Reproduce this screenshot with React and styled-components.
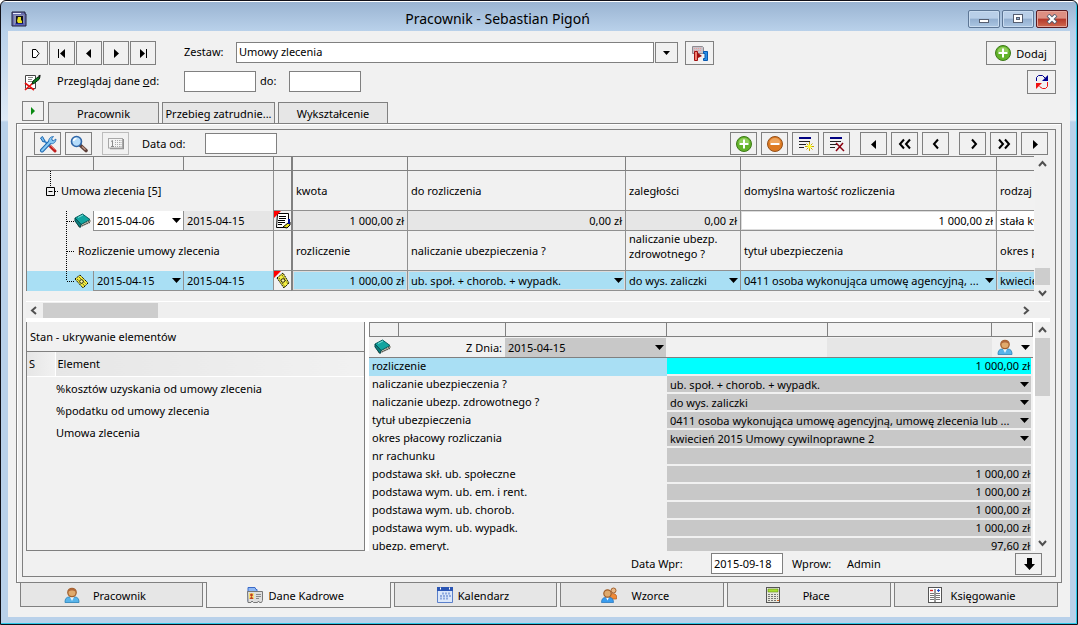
import React from "react";
import styled, { createGlobalStyle, css } from "styled-components";

const line = "#808080";
const face = "#f1f1f1";
const selected = "#a9dff4";
const sunken = "#e6e6e6";
const field = "#c8c8c8";

const GlobalStyle = createGlobalStyle`
  * { box-sizing: border-box; }
  body { margin: 0; }
  body, button, input, select {
    font-family: "Noto Sans", "Open Sans", sans-serif;
    font-size: 11px;
    line-height: 15px;
    color: #000;
  }
  svg { display: block; flex: none; }
`;

/* ---------- window frame ---------- */

const Window = styled.div`
  height: 100vh;
  min-height: 560px;
  display: flex;
  flex-direction: column;
  border: 1px solid #101018;
  border-radius: 6px 6px 0 0;
  box-shadow: inset -1px -1px 0 #2cc8e8;
  padding: 0 7px 7px;
  background: linear-gradient(#fff 0 1px, #9ab4d2 1px, #b9d1ea 30px, #dfeaf6 119px, #b9d1ea 121px);
`;

const TitleBar = styled.header`
  height: 30px;
  flex: none;
  display: flex;
  align-items: center;
  padding: 6px 2px 0 3px;
`;

const Title = styled.h1`
  flex: 1;
  margin: 0;
  text-align: center;
  font-size: 14px;
  line-height: 20px;
  font-weight: 400;
`;

const WindowButtons = styled.div`
  display: flex;
  gap: 2px;
`;

const WindowButton = styled.button`
  width: 32px;
  height: 18px;
  padding: 0;
  display: grid;
  place-items: center;
  border: 1px solid ${(p) => (p.$close ? "#5a1a20" : "#5d7695")};
  border-radius: 2px;
  box-shadow: inset 0 0 0 1px ${(p) => (p.$close ? "#e6a79c" : "#c9dcf0")};
  background: ${(p) =>
    p.$close
      ? "linear-gradient(#dd8f82 0 45%, #b5382a 50%, #cf6a50)"
      : "linear-gradient(#b9cfe8 0 45%, #93afd0 50%, #abc6e2)"};
`;

const Content = styled.main`
  flex: 1;
  min-height: 0;
  display: flex;
  flex-direction: column;
  padding: 10px 8px;
  background: ${face};
`;

/* ---------- shared controls ---------- */

const ToolButton = styled.button`
  width: ${(p) => p.$w || 27}px;
  height: ${(p) => p.$h || 23}px;
  flex: none;
  padding: 0;
  display: flex;
  align-items: center;
  justify-content: center;
  gap: 5px;
  border: 1px solid ${line};
  background: ${face};
  &:disabled { border-color: #bcbcbc; }
`;

const TextInput = styled.input`
  width: 72px;
  height: 21px;
  flex: none;
  padding: 0 2px;
  margin-right: ${(p) => p.$after || 0}px;
  border: 1px solid ${line};
  background: #fff;
`;

const Row = styled.div`
  display: flex;
  align-items: center;
  height: 24px;
  flex: none;
  padding: 0 6px;
  margin-bottom: ${(p) => p.$after || 0}px;
  label { padding-bottom: 3px; }
  input { margin-bottom: 1px; }
`;

const ButtonGroup = styled.div`
  display: flex;
  gap: ${(p) => p.$gap}px;
  margin-right: ${(p) => p.$after || 0}px;
`;

const IconSlot = styled.span`
  width: 35px;
  flex: none;
  padding-left: 2px;
`;

const RowLabel = styled.label`
  width: ${(p) => p.$w}px;
  flex: none;
  white-space: nowrap;
`;

const Spacer = styled.div`
  flex: 1;
`;

const Combo = styled.div`
  display: grid;
  grid-template-columns: 1fr 23px;
  gap: 1px;
  height: 21px;
  flex: 0 1 442px;
  margin: 0 7px 1px 0;
`;

const ComboSelect = styled.select`
  appearance: none;
  min-width: 0;
  padding: 0 2px 2px;
  border: 1px solid ${line};
  border-radius: 0;
  background: #fff;
`;

const ComboArrow = styled.span`
  display: grid;
  place-items: center;
  border: 1px solid ${line};
`;

const SelectBox = styled.span`
  display: grid;
  grid-template-columns: minmax(0, 1fr) 10px;
  align-items: center;
  padding-right: 1px;
  height: ${(p) => p.$h || 19}px;
  background: ${(p) => p.$bg || "transparent"};
  svg { grid-area: 1 / 2; pointer-events: none; }
`;

const InlineSelect = styled.select`
  grid-area: 1 / 1 / 2 / 3;
  appearance: none;
  width: 100%;
  height: 15px;
  padding: 0 3px;
  border: 0;
  background: transparent;
  text-overflow: clip;
`;

/* ---------- tabs and frames ---------- */

const TopTabs = styled.nav`
  display: flex;
  align-items: flex-end;
  gap: 3px;
  height: 22px;
  flex: none;
  margin-top: 7px;
  padding: 0 6px;
`;

const StartButton = styled(ToolButton)`
  align-self: flex-start;
  margin-right: 1px;
`;

const TopTab = styled.button`
  width: ${(p) => p.$w}px;
  height: 21px;
  padding: 0 2px;
  border: 1px solid ${line};
  border-bottom: 0;
  background: ${sunken};
  white-space: nowrap;
`;

const TabPanel = styled.section`
  flex: 1;
  min-height: 0;
  display: flex;
  border: 1px solid ${line};
  box-shadow: inset 1px 1px 0 #fff;
  padding: 5px;
`;

const Frame = styled.div`
  flex: 1;
  min-width: 0;
  display: flex;
  flex-direction: column;
  border: 1px solid ${line};
  padding: 0 5px 0 3px;
`;

const Toolbar = styled.div`
  display: flex;
  align-items: center;
  flex: none;
  height: 26px;
  padding: 1px 2px 0 8px;
`;

/* ---------- scroll bars ---------- */

const VScroll = styled.div`
  width: 15px;
  flex: none;
  display: flex;
  flex-direction: column;
  align-items: center;
  background: #f0f0f0;
`;

const HScroll = styled.div`
  height: 17px;
  flex: none;
  display: flex;
  align-items: center;
  border-top: 1px solid #fff;
  padding-right: 16px;
  background: #efefef;
`;

const ScrollButton = styled.button`
  width: 17px;
  height: 16px;
  flex: none;
  padding: 0;
  display: grid;
  place-items: center;
  border: 0;
  background: transparent;
`;

const Thumb = styled.div`
  width: ${(p) => p.$w}px;
  height: ${(p) => p.$h}px;
  flex: none;
  background: #cdcdcd;
`;

/* ---------- upper grid ---------- */

const GridArea = styled.div`
  height: 145px;
  flex: none;
  display: flex;
  gap: 1px;
`;

const GridClip = styled.div`
  flex: 1;
  min-width: 0;
  overflow: hidden;
`;

const Grid = styled.table`
  width: 1080px;
  table-layout: fixed;
  border-collapse: separate;
  border-spacing: 0;
  border-left: 1px solid ${line};
`;

const GridRow = styled.tr`
  height: ${(p) => p.$h}px;
  background: ${(p) => (p.$selected ? selected : "transparent")};
`;

const HeadCell = styled.th`
  padding: 0;
  height: 15px;
  border: solid ${line};
  border-width: 1px 0 1px 1px;
  &:first-child { border-left: 0; }
  ${(p) => p.$heavy && "border-left-width: 2px;"}
`;

const Cell = styled.td`
  padding: 0 3px;
  font-weight: 400;
  text-align: ${(p) => (p.$right ? "right" : "left")};
  vertical-align: ${(p) => (p.$top ? "top" : "middle")};
  border: solid #909090;
  border-width: 0 0 1px 1px;
  background: ${(p) => p.$bg || "transparent"};
  overflow: hidden;
  ${(p) => p.$heavy && `border-left: 2px solid ${line};`}
  ${(p) => p.$tree && "border-width: 0; padding: 0;"}
  ${(p) => p.$flush && "padding: 0;"}
  ${(p) => p.$nowrap && "white-space: nowrap;"}
  ${(p) => p.$framed && "box-shadow: inset 0 0 0 1px #dcdcdc;"}
`;

const TreeLine = styled.div`
  display: flex;
  align-items: center;
  height: ${(p) => p.$h}px;
  white-space: nowrap;
`;

const TreeText = styled.span`
  padding: 0 0 2px ${(p) => p.$indent || 0}px;
`;

const CellInput = styled.input`
  width: 100%;
  height: 15px;
  padding: 0;
  border: 0;
  background: transparent;
  text-align: right;
`;

/* ---------- lower panes ---------- */

const Lower = styled.div`
  flex: 1;
  min-height: 0;
  display: flex;
  border-top: 4px solid #fff;
`;

const StatePane = styled.section`
  width: 339px;
  flex: none;
  border: solid ${line};
  border-width: 0 1px 1px;
`;

const PaneTitle = styled.h2`
  margin: 0;
  height: 30px;
  padding: 7px 3px;
  border-bottom: 1px solid ${line};
  font-size: 11px;
  font-weight: 400;
`;

const StateTable = styled.table`
  width: 100%;
  border-collapse: collapse;
  th, td {
    padding: 0 2px;
    text-align: left;
    font-weight: 400;
    height: 22px;
  }
  td { padding: 0 1px; }
  th {
    height: 24px;
    border-bottom: 1px solid #fff;
    background: linear-gradient(90deg, #e6e6e6, #f1f1f1);
  }
  th:first-child { width: 28px; border-right: 1px solid #fff; }
  tbody::before { content: ""; display: block; height: 1px; }
`;

const DetailPane = styled.section`
  flex: 1;
  min-width: 0;
  display: flex;
  flex-direction: column;
  overflow: hidden;
  border: solid #fff;
  border-width: 0 2px 0 4px;
`;

const Ruler = styled.div`
  display: grid;
  grid-template-columns: 29px 107px 161px 161px 1fr 41px;
  height: 15px;
  flex: none;
  border: 1px solid ${line};
  border-left: 0;
  span { border-left: 1px solid ${line}; }
`;

const DetailHead = styled.div`
  display: grid;
  grid-template-columns: 29px 107px 161px 161px 1fr 41px;
  align-items: center;
  height: 21px;
  flex: none;
  border-bottom: 1px solid ${line};
`;

const HeadLabel = styled.label`
  text-align: right;
  padding-right: 3px;
`;

const Blank = styled.span`
  height: 19px;
  background: ${(p) => p.$bg};
`;

const PersonCell = styled.button`
  display: flex;
  align-items: center;
  justify-content: space-between;
  padding: 0 3px 0 5px;
  border: 0;
  background: transparent;
`;

const Details = styled.table`
  width: 100%;
  table-layout: fixed;
  border-collapse: separate;
  border-spacing: 0;
  tr { height: 18px; }
  col:first-child { width: 298px; }
`;

const DetailName = styled.th`
  padding: 0 3px 1px;
  text-align: left;
  font-weight: 400;
  vertical-align: top;
  background: ${(p) => (p.$selected ? selected : "transparent")};
`;

const DetailValue = styled.td`
  padding: 0 2px 2px 0;
  vertical-align: top;
`;

const ValueBox = styled.div`
  height: 16px;
  padding: 0 1px 0 3px;
  text-align: right;
  background: ${(p) => (p.$selected ? "#00ffff" : field)};
`;

const Footer = styled.div`
  display: flex;
  align-items: center;
  justify-content: flex-end;
  height: 25px;
  flex: none;
  padding-right: 8px;
`;

const FooterText = styled.span`
  width: ${(p) => p.$w}px;
`;

/* ---------- bottom tabs ---------- */

const BottomTabs = styled.nav`
  display: flex;
  gap: 3px;
  height: 24px;
  flex: none;
  padding: 0 4px;
`;

const BottomTab = styled.button`
  flex: 1 1 ${(p) => p.$w}px;
  height: 24px;
  padding: 1px ${(p) => p.$gap}px 0 0;
  display: flex;
  align-items: center;
  justify-content: center;
  gap: ${(p) => p.$gap}px;
  border: 1px solid ${line};
  border-top: 0;
  background: #e6e6e6;
  ${(p) =>
    p.$active &&
    css`
      height: 26px;
      margin-top: -1px;
      background: ${face};
    `}
`;

/* ---------- icons ---------- */

const Glyph = ({ w = 16, h = 16, vb, children }) => (
  <svg width={w} height={h} viewBox={vb || `0 0 ${w} ${h}`} aria-hidden="true">
    {children}
  </svg>
);

const DownArrow = () => (
  <Glyph w={9} h={5}><path d="M0 0h9L4.500 5z" /></Glyph>
);
const SmallDown = () => (
  <Glyph w={7} h={4}><path d="M0 0h7L3.500 4z" /></Glyph>
);
const Chevron = ({ dir }) => {
  const d = { up: "M2 7l3.500-4L9 7", down: "M2 3l3.500 4L9 3", left: "M7 2L3 5.500 7 9", right: "M4 2l4 3.500L4 9" }[dir];
  return <Glyph w={11} h={11}><path d={d} fill="none" stroke="#505050" strokeWidth="2" /></Glyph>;
};
const Nav = ({ kind }) => {
  const stroke = { fill: "none", stroke: "#000", strokeWidth: 2 };
  const shapes = {
    tag: <path d="M5.500 4.500h3.500l3 4-3 4h-3.500z" fill="#fff" stroke="#000" />,
    first: <path d="M4 4h1v9H4zM11 4v9L6 8.500z" />,
    prev: <path d="M10 4v9L5 8.500z" />,
    next: <path d="M6 4v9l5-4.500z" />,
    last: <path d="M11 4h1v9h-1zM5 4v9l5-4.500z" />,
    back2: <path d="M7 3.500L3 8l4 4.500M13 3.500L9 8l4 4.500" {...stroke} />,
    back: <path d="M10 3.500L6 8l4 4.500" {...stroke} />,
    fwd: <path d="M7 3.500L11 8l-4 4.500" {...stroke} />,
    fwd2: <path d="M3 3.500L7 8l-4 4.500M9 3.500L13 8l-4 4.500" {...stroke} />,
    run: <path d="M6 4v8l4-4z" fill="#0a8a12" />,
    save: <path d="M6 2h5v6h3l-5.500 6L3 8h3z" />,
  };
  return <Glyph>{shapes[kind]}</Glyph>;
};
const Plus = () => (
  <Glyph>
    <circle cx="8" cy="8" r="7.500" fill="#63b32a" stroke="#3d7a18" />
    <path d="M2.500 7a5.500 5 0 0 1 11 0z" fill="#a5dc70" opacity=".7" />
    <path d="M8 3.500v9M3.500 8h9" stroke="#fff" strokeWidth="2" />
  </Glyph>
);
const Minus = () => (
  <Glyph>
    <circle cx="8" cy="8" r="7.500" fill="#dd7a22" stroke="#93511c" />
    <path d="M2.500 7a5.500 5 0 0 1 11 0z" fill="#f5b877" opacity=".7" />
    <path d="M3.500 8h9" stroke="#fff" strokeWidth="2" />
  </Glyph>
);
const LinesNew = () => (
  <Glyph>
    <path d="M1 1h12v2H1z" fill="#000080" />
    <path d="M1 5.500h11M1 8.500h7M1 11.500h5" stroke="#222" />
    <path d="M11.500 6v9M7 10.500h9M8.500 7.500l6 6M14.500 7.500l-6 6" stroke="#c8a800" />
    <circle cx="11.500" cy="10.500" r="2" fill="#ffff30" />
  </Glyph>
);
const LinesDelete = () => (
  <Glyph>
    <path d="M1 1h12v2H1z" fill="#000080" />
    <path d="M1 5.500h11M1 8.500h7M1 11.500h5" stroke="#222" />
    <path d="M7 7l8 8M14 7l-7 8" stroke="#8a0010" strokeWidth="1.500" />
  </Glyph>
);
const Refresh = () => (
  <Glyph>
    <path d="M2.500 7V3.500L4.500 1.500h4l3 3" fill="none" stroke="#000090" />
    <path d="M14 1v6H8z" fill="#000090" />
    <path d="M13.500 8v4.500l-2 2h-3l-3-2" fill="none" stroke="#f01010" />
    <path d="M2 15V9h6z" fill="#f01010" />
  </Glyph>
);
const Tools = () => (
  <Glyph w={18} h={18}>
    <path d="M11 11l5 5" stroke="#c02020" strokeWidth="3" strokeLinecap="round" />
    <path d="M11 10l4.500 4.500" stroke="#f06a5a" />
    <path d="M4 5l7 6" stroke="#3a8ad0" strokeWidth="2" />
    <path d="M1.500 3l2-1.500L6 6 4 7z" fill="#78bdf0" stroke="#1d66ae" />
    <path d="M3 15.500L12 6" stroke="#1d66ae" strokeWidth="4" strokeLinecap="round" />
    <path d="M10 7.500c-1-3 1-6 4.500-6L12.500 4l1.500 2 3-2c0 3-2.500 5.500-5.500 4.500z" fill="#86c8f4" stroke="#1d66ae" strokeWidth=".8" />
    <path d="M3 15.500L12 6" stroke="#86c8f4" strokeWidth="2" strokeLinecap="round" />
  </Glyph>
);
const Magnifier = () => (
  <Glyph w={18} h={18}>
    <path d="M10.500 10.500l5.500 5" stroke="#5d4039" strokeWidth="3.600" strokeLinecap="round" />
    <path d="M12 11.500l3.500 3.300" stroke="#c49a88" strokeWidth="1.400" />
    <circle cx="6.500" cy="6.500" r="5" fill="#b5dcfa" stroke="#2f66a8" strokeWidth="1.600" />
    <path d="M3.500 6a3.200 3.200 0 0 1 3-2.500" fill="none" stroke="#fff" strokeWidth="1.600" />
  </Glyph>
);
const Card = () => (
  <Glyph>
    <path d="M2 12.500h13.500V3" fill="none" stroke="#8e8e8e" strokeWidth="1.500" />
    <rect x=".5" y="2.500" width="14" height="9.500" fill="#f4f4f4" stroke="#a8a8a8" />
    <path d="M3 5.500l1.500-1v6M3 10.500h3" fill="none" stroke="#8c8c8c" />
    <path d="M7.500 4v7M9.500 4v7M11.500 4v7M13 4v7" stroke="#aaa" strokeDasharray="1 1" />
  </Glyph>
);
const AppIcon = () => (
  <Glyph>
    <path d="M1 1h13v2h1v12H1z" fill="#6a70b0" stroke="#20203c" />
    <path d="M2 2h8v1H2z" fill="#e8eafa" />
    <path d="M3 4h10v10H3z" fill="#8a8fb0" />
    <path d="M5 5h7v8H5z" fill="#101020" />
    <path d="M7 6h3v3l1 1v2H7l-1-2z" fill="#e8e020" />
    <path d="M4 13h9" stroke="#2430d0" />
  </Glyph>
);
const EditMark = () => (
  <Glyph w={17} h={17}>
    <path d="M1.500 1.500h10v13h-10z" fill="#fff" stroke="#444" />
    <path d="M4 3.500h5M4 5.500h4M4 7.500h5" stroke="#888" />
    <path d="M1 9l9 7M9 9l-8 7" stroke="#e81010" strokeWidth="1.600" />
    <path d="M8 10l1-3 5-4 2 .5-1 2-5 4z" fill="#0c7a20" stroke="#062e0c" />
    <path d="M14.500 2.500l2-1" stroke="#000" strokeWidth="1.500" />
  </Glyph>
);
const Link = () => (
  <Glyph w={17} h={17}>
    <path d="M1.500 1.500h10l1 1v6h-11z" fill="#c9c4ca" stroke="#8f8a90" />
    <path d="M3 3.500h8M3 5.500h8" stroke="#ee9a9a" strokeDasharray="1 1" />
    <path d="M3.500 6.500h3v9h-3z" fill="#f08070" stroke="#a01010" />
    <path d="M7 8l4 3-4 2z" fill="#a01010" />
    <path d="M12.500 6.500h4v9h-4v-2H14v-5h-1.500z" fill="#2a90e8" stroke="#0858b0" />
  </Glyph>
);
const Book = () => (
  <Glyph w={17} h={16}>
    <path d="M1 7l4 7 11-5v-2z" fill="#f4f0dc" stroke="#5d5a4a" strokeWidth=".8" />
    <path d="M5 12.500L15.500 8M6 14l10-4.500" stroke="#333" strokeDasharray="1 1" />
    <path d="M1 5l7.500-4L16 6.500 7 11.500z" fill="#12a5a0" stroke="#075f60" />
    <path d="M1 5v3l5 6.500 1-3z" fill="#0a7f80" stroke="#054a4c" />
    <path d="M4 4.500l5-2.500" stroke="#7de0d8" />
  </Glyph>
);
const Money = () => (
  <Glyph w={15} h={16}>
    <path d="M1 6l5-4 8 8-5 5z" fill="#f4ee40" stroke="#000" strokeDasharray="1.500 .7" />
    <path d="M3 6l8 7M5 4l7 7" stroke="#000" strokeWidth=".8" strokeDasharray="1 1" />
    <circle cx="7.500" cy="8.500" r="1.800" fill="#fff8a0" stroke="#000" strokeWidth=".8" />
  </Glyph>
);
const NoteFlag = () => (
  <Glyph w={17} h={19}>
    <path d="M3.500 2.500h11v12l-3 2h-9z" fill="#fff" stroke="#000" />
    <path d="M5 5.500h7M5 7.500h7M4 9.500h7M4 11.500h7M4 13.500h4" stroke="#000" />
    <path d="M9 16l5-4 2-1v3l-3 3z" fill="#e8e020" stroke="#000" />
    <path d="M15 8v5" stroke="#0010a0" strokeWidth="2" />
    <path d="M0 0h7L0 7z" fill="#f00" />
  </Glyph>
);
const MoneyFlag = () => (
  <Glyph w={17} h={19}>
    <path d="M3 7l6-5 6 10-5 5z" fill="#f4ee40" stroke="#000" strokeDasharray="1.500 .7" />
    <path d="M5 7l6 9M8 4l6 9" stroke="#000" strokeWidth=".8" strokeDasharray="1 1" />
    <circle cx="9" cy="9.500" r="1.800" fill="#fff8a0" stroke="#000" strokeWidth=".8" />
    <path d="M0 0h7L0 7z" fill="#f00" />
  </Glyph>
);
const Person = () => (
  <Glyph>
    <path d="M1 15.500c0-4 1.500-5.500 4.500-5.500h5c3 0 4.500 1.500 4.500 5.500z" fill="#58b4ea" stroke="#2a82b8" strokeWidth=".8" />
    <path d="M6 10l2 4 2-4z" fill="#e8f4fc" />
    <circle cx="8" cy="5.500" r="4.200" fill="#e0aa6c" stroke="#a2602c" strokeWidth="1.300" />
    <path d="M4 5c0-5 8-5 8 0-2-2-6-2-8 0z" fill="#b0683a" />
  </Glyph>
);
const People = () => (
  <Glyph>
    <path d="M9 10V8c0-2 6-2 6.500 1v3H10z" fill="#ee8a38" stroke="#b85a18" strokeWidth=".7" />
    <circle cx="12.500" cy="3.500" r="2.500" fill="#e8b888" stroke="#a2602c" />
    <path d="M.5 15.500c0-3.500 1.500-5 4-5h4c2.500 0 4 1.500 4 5z" fill="#3a9cee" stroke="#1f70b8" strokeWidth=".7" />
    <path d="M5 10.500l1.500 3 1.500-3z" fill="#fff" />
    <circle cx="6.500" cy="6.500" r="3.700" fill="#e0aa6c" stroke="#a2602c" strokeWidth="1.200" />
  </Glyph>
);
const Files = () => (
  <Glyph>
    <path d="M1 .5h7l1 2h1v12H1z" fill="#8fb8f4" stroke="#3a6ac8" />
    <path d="M.5 4.500h15v9l-1 2h-2l-1-1.500-1 1.500h-4L5 14l-1 1.500H1z" fill="#dedede" stroke="#777" />
    <path d="M2 6h5v6H2z" fill="#f6e27a" />
    <circle cx="4.500" cy="8" r="1.400" fill="#c04020" />
    <path d="M2.500 12l2-3 2 3z" fill="#c04020" />
    <path d="M9 7.500h5M9 9.500h5M9 11.500h3" stroke="#8a8a8a" />
  </Glyph>
);
const Calendar = () => (
  <Glyph>
    <path d="M.5.500h15v15H.5z" fill="#dbe7fa" stroke="#5a7fca" />
    <path d="M0 0h16v4H0z" fill="#2a55b4" />
    <path d="M3 1.500h1M12 1.500h1" stroke="#fff" strokeWidth="2" />
    <path d="M5 6.500h9M3 9h11M3 11.500h9" stroke="#8eaae0" strokeWidth="2" strokeDasharray="2 1" />
  </Glyph>
);
const Calculator = () => (
  <Glyph w={14} h={16}>
    <rect x=".5" y=".5" width="13" height="15" fill="#e8e8df" stroke="#555" />
    <path d="M2 2h10v3H2z" fill="#a8e030" stroke="#5e8a18" strokeWidth=".6" />
    <path d="M2 7.500h10M2 9.500h10M2 11.500h10M2 13.500h10" stroke="#777" strokeDasharray="2 1" />
    <path d="M11 13.500h2" stroke="#e06a20" strokeWidth="1.200" />
  </Glyph>
);
const Ledger = () => (
  <Glyph w={14} h={16}>
    <rect x=".5" y=".5" width="13" height="15" fill="#fff" stroke="#555" />
    <path d="M2 3.500h3" stroke="#e02020" strokeWidth="1.400" />
    <path d="M10.500 2v3M9 3.500h3" stroke="#2050d0" strokeWidth="1.200" />
    <path d="M7 2v13" stroke="#333" />
    <path d="M2 6.500h4M2 8.500h4M2 10.500h4M2 12.500h4M8 6.500h4M8 8.500h4M8 10.500h4M8 12.500h4" stroke="#777" strokeWidth="1.200" />
  </Glyph>
);
const TreeRoot = () => (
  <Glyph w={34} h={40}>
    <path d="M23.500 0v16M28 20.500h4" stroke="#000" strokeDasharray="1 1" />
    <path d="M19.500 16.500h8v8h-8zM21.500 20.500h4" fill="none" stroke="#000" />
  </Glyph>
);
const Branch = ({ h, end }) => (
  <Glyph w={47} h={h}>
    <path d={`M39.500 0v${end ? h / 2 : h}M40 ${h / 2 + 0.5}h7`} stroke="#000" strokeDasharray="1 1" fill="none" />
  </Glyph>
);

/* ---------- data ---------- */

const columns = [66, 90, 90, 18, 116, 218, 115, 256, 110];

const details = [
  { name: "rozliczenie", value: "1 000,00 zł", selected: true },
  { name: "naliczanie ubezpieczenia ?", value: "ub. społ. + chorob. + wypadk.", list: true },
  { name: "naliczanie ubezp. zdrowotnego ?", value: "do wys. zaliczki", list: true },
  { name: "tytuł ubezpieczenia", value: "0411 osoba wykonująca umowę agencyjną, umowę zlecenia lub ...", list: true },
  { name: "okres płacowy rozliczania", value: "kwiecień 2015 Umowy cywilnoprawne 2", list: true },
  { name: "nr rachunku", value: "" },
  { name: "podstawa skł. ub. społeczne", value: "1 000,00 zł" },
  { name: "podstawa wym. ub. em. i rent.", value: "1 000,00 zł" },
  { name: "podstawa wym. ub. chorob.", value: "1 000,00 zł" },
  { name: "podstawa wym. ub. wypadk.", value: "1 000,00 zł" },
  { name: "ubezp. emeryt.", value: "97,60 zł" },
];

const bottomTabs = [
  { label: "Pracownik", icon: <Person />, w: 183, gap: 13 },
  { label: "Dane Kadrowe", icon: <Files />, w: 185, gap: 6, active: true },
  { label: "Kalendarz", icon: <Calendar />, w: 164, gap: 5 },
  { label: "Wzorce", icon: <People />, w: 164, gap: 14 },
  { label: "Płace", icon: <Calculator />, w: 164, gap: 23 },
  { label: "Księgowanie", icon: <Ledger />, w: 164, gap: 9 },
];

const toolGroups = [
  { after: 10, items: [["Dodaj pozycję", <Plus />], ["Usuń pozycję", <Minus />], ["Nowy wiersz", <LinesNew />], ["Usuń wiersz", <LinesDelete />]] },
  { after: 10, items: [["Pierwszy", <Nav kind="prev" />], ["Strona wstecz", <Nav kind="back2" />], ["Wstecz", <Nav kind="back" />]] },
  { after: 0, items: [["Dalej", <Nav kind="fwd" />], ["Strona dalej", <Nav kind="fwd2" />], ["Ostatni", <Nav kind="next" />]] },
];

const Picker = ({ label, value, bg, h, id }) => (
  <SelectBox $bg={bg} $h={h}>
    <InlineSelect id={id} aria-label={label} defaultValue={value}>
      <option>{value}</option>
    </InlineSelect>
    <DownArrow />
  </SelectBox>
);

function ContractGrid() {
  return (
    <Grid>
      <colgroup>
        {columns.map((w, i) => <col key={i} style={{ width: w }} />)}
      </colgroup>
      <thead>
        <tr>{columns.map((w, i) => <HeadCell key={i} $heavy={i === 4} />)}</tr>
      </thead>
      <tbody>
        <GridRow $h={40}>
          <Cell $tree colSpan={3}><TreeLine $h={40}><TreeRoot /><TreeText>Umowa zlecenia [5]</TreeText></TreeLine></Cell>
          <Cell />
          <Cell $heavy>kwota</Cell>
          <Cell>do rozliczenia</Cell>
          <Cell>zaległości</Cell>
          <Cell>domyślna wartość rozliczenia</Cell>
          <Cell $nowrap>rodzaj kwoty</Cell>
        </GridRow>
        <GridRow $h={20}>
          <Cell $tree><TreeLine $h={20}><Branch h={20} /><Book /></TreeLine></Cell>
          <Cell $flush $bg="#fff"><Picker label="Data od" value="2015-04-06" /></Cell>
          <Cell $bg={sunken}>2015-04-15</Cell>
          <Cell $flush><NoteFlag /></Cell>
          <Cell $heavy $right $bg={sunken}>1 000,00 zł</Cell>
          <Cell $right $bg={sunken}>0,00 zł</Cell>
          <Cell $right $bg={sunken}>0,00 zł</Cell>
          <Cell $bg="#fff" $framed><CellInput aria-label="domyślna wartość rozliczenia" defaultValue="1 000,00 zł" /></Cell>
          <Cell $bg="#fff" $nowrap>stała kwota</Cell>
        </GridRow>
        <GridRow $h={40}>
          <Cell $tree colSpan={3}><TreeLine $h={40}><Branch h={40} /><TreeText $indent={4}>Rozliczenie umowy zlecenia</TreeText></TreeLine></Cell>
          <Cell />
          <Cell $heavy>rozliczenie</Cell>
          <Cell>naliczanie ubezpieczenia ?</Cell>
          <Cell $top>naliczanie ubezp. zdrowotnego ?</Cell>
          <Cell>tytuł ubezpieczenia</Cell>
          <Cell $nowrap>okres płacowy</Cell>
        </GridRow>
        <GridRow $h={20} $selected>
          <Cell $tree><TreeLine $h={20}><Branch h={20} end /><Money /></TreeLine></Cell>
          <Cell $flush><Picker label="Data od" value="2015-04-15" /></Cell>
          <Cell>2015-04-15</Cell>
          <Cell $flush $bg={face}><MoneyFlag /></Cell>
          <Cell $heavy $right $framed>1 000,00 zł</Cell>
          <Cell $flush $framed><Picker label="naliczanie ubezpieczenia ?" value="ub. społ. + chorob. + wypadk." /></Cell>
          <Cell $flush><Picker label="naliczanie ubezp. zdrowotnego ?" value="do wys. zaliczki" /></Cell>
          <Cell $flush><Picker label="tytuł ubezpieczenia" value="0411 osoba wykonująca umowę agencyjną, ..." /></Cell>
          <Cell $nowrap $framed>kwiecień 2015</Cell>
        </GridRow>
      </tbody>
    </Grid>
  );
}

export default function App() {
  return (
    <>
      <GlobalStyle />
      <Window>
        <TitleBar>
          <AppIcon />
          <Title>Pracownik - Sebastian Pigoń</Title>
          <WindowButtons>
            <WindowButton aria-label="Minimalizuj">
              <Glyph w={12} h={10}><rect x="1.500" y="5.500" width="9" height="3" fill="#fff" stroke="#555e70" /></Glyph>
            </WindowButton>
            <WindowButton aria-label="Maksymalizuj">
              <Glyph w={12} h={10}>
                <rect x="1.500" y=".5" width="9" height="8" fill="#fff" stroke="#555e70" />
                <rect x="4.500" y="3.500" width="3" height="2" fill="#93afd0" stroke="#555e70" />
              </Glyph>
            </WindowButton>
            <WindowButton $close aria-label="Zamknij">
              <Glyph w={12} h={10}>
                <path d="M2 1l8 8M10 1L2 9" stroke="#555e70" strokeWidth="4" />
                <path d="M2.500 1.500l7 7M9.500 1.500l-7 7" stroke="#fff" strokeWidth="2.200" />
              </Glyph>
            </WindowButton>
          </WindowButtons>
        </TitleBar>

        <Content>
          <Row $after={5}>
            <ButtonGroup $gap={1} $after={28}>
              <ToolButton $w={26} $h={24} aria-label="Dane"><Nav kind="tag" /></ToolButton>
              <ToolButton $w={26} $h={24} aria-label="Pierwszy"><Nav kind="first" /></ToolButton>
              <ToolButton $w={26} $h={24} aria-label="Poprzedni"><Nav kind="prev" /></ToolButton>
              <ToolButton $w={26} $h={24} aria-label="Następny"><Nav kind="next" /></ToolButton>
              <ToolButton $w={26} $h={24} aria-label="Ostatni"><Nav kind="last" /></ToolButton>
            </ButtonGroup>
            <RowLabel $w={52} htmlFor="zestaw">Zestaw:</RowLabel>
            <Combo>
              <ComboSelect id="zestaw" defaultValue="Umowy zlecenia"><option>Umowy zlecenia</option></ComboSelect>
              <ComboArrow><SmallDown /></ComboArrow>
            </Combo>
            <ToolButton $w={29} $h={24} aria-label="Powiązania"><Link /></ToolButton>
            <Spacer />
            <ToolButton $w={70} $h={24}><Plus />Dodaj</ToolButton>
          </Row>

          <Row>
            <IconSlot><EditMark /></IconSlot>
            <RowLabel $w={127} htmlFor="od">Przeglądaj dane <u>o</u>d:</RowLabel>
            <TextInput id="od" $after={4} />
            <RowLabel $w={29} htmlFor="do">do:</RowLabel>
            <TextInput id="do" />
            <Spacer />
            <ToolButton $w={29} $h={24} aria-label="Odśwież"><Refresh /></ToolButton>
          </Row>

          <TopTabs>
            <StartButton $w={22} $h={20} aria-label="Uruchom"><Nav kind="run" /></StartButton>
            <TopTab $w={111}>Pracownik</TopTab>
            <TopTab $w={113}>Przebieg zatrudnie...</TopTab>
            <TopTab $w={110}>Wykształcenie</TopTab>
          </TopTabs>

          <TabPanel>
            <Frame>
              <Toolbar>
                <ButtonGroup $gap={4} $after={10}>
                  <ToolButton aria-label="Narzędzia"><Tools /></ToolButton>
                  <ToolButton aria-label="Szukaj"><Magnifier /></ToolButton>
                </ButtonGroup>
                <ButtonGroup $gap={0} $after={13}>
                  <ToolButton disabled aria-label="Karta"><Card /></ToolButton>
                </ButtonGroup>
                <RowLabel $w={63} htmlFor="data-od">Data od:</RowLabel>
                <TextInput id="data-od" />
                <Spacer />
                {toolGroups.map((g, i) => (
                  <ButtonGroup key={i} $gap={4} $after={g.after}>
                    {g.items.map(([name, icon]) => <ToolButton key={name} aria-label={name}>{icon}</ToolButton>)}
                  </ButtonGroup>
                ))}
              </Toolbar>

              <GridArea>
                <GridClip><ContractGrid /></GridClip>
                <VScroll>
                  <ScrollButton aria-label="W górę"><Chevron dir="up" /></ScrollButton>
                  <Spacer />
                  <Thumb $w={15} $h={17} />
                  <ScrollButton aria-label="W dół"><Chevron dir="down" /></ScrollButton>
                </VScroll>
              </GridArea>
              <HScroll>
                <ScrollButton aria-label="W lewo"><Chevron dir="left" /></ScrollButton>
                <Thumb $w={115} $h={15} />
                <Spacer />
                <ScrollButton aria-label="W prawo"><Chevron dir="right" /></ScrollButton>
              </HScroll>

              <Lower>
                <StatePane>
                  <PaneTitle>Stan - ukrywanie elementów</PaneTitle>
                  <StateTable>
                    <thead><tr><th>S</th><th>Element</th></tr></thead>
                    <tbody>
                      <tr><td /><td>%kosztów uzyskania od umowy zlecenia</td></tr>
                      <tr><td /><td>%podatku od umowy zlecenia</td></tr>
                      <tr><td /><td>Umowa zlecenia</td></tr>
                    </tbody>
                  </StateTable>
                </StatePane>
                <DetailPane>
                  <Ruler><span /><span /><span /><span /><span /><span /></Ruler>
                  <DetailHead>
                    <PersonCell aria-label="Umowa"><Book /></PersonCell>
                    <HeadLabel htmlFor="z-dnia">Z Dnia:</HeadLabel>
                    <Picker id="z-dnia" label="Z Dnia" value="2015-04-15" bg={field} />
                    <Blank />
                    <Blank $bg={sunken} />
                    <PersonCell aria-label="Osoba"><Person /><DownArrow /></PersonCell>
                  </DetailHead>
                  <Details>
                    <colgroup><col /><col /></colgroup>
                    <tbody>
                      {details.map((d) => (
                        <tr key={d.name}>
                          <DetailName scope="row" $selected={d.selected}>{d.name}</DetailName>
                          <DetailValue>
                            {d.list
                              ? <Picker label={d.name} value={d.value} bg={field} h={16} />
                              : <ValueBox $selected={d.selected}>{d.value}</ValueBox>}
                          </DetailValue>
                        </tr>
                      ))}
                    </tbody>
                  </Details>
                </DetailPane>
                <VScroll>
                  <ScrollButton aria-label="W górę"><Chevron dir="up" /></ScrollButton>
                  <Thumb $w={15} $h={58} />
                  <Spacer />
                  <ScrollButton aria-label="W dół"><Chevron dir="down" /></ScrollButton>
                </VScroll>
              </Lower>

              <Footer>
                <RowLabel $w={80} htmlFor="data-wpr">Data Wpr:</RowLabel>
                <TextInput id="data-wpr" defaultValue="2015-09-18" $after={9} />
                <FooterText $w={55}>Wprow:</FooterText>
                <FooterText $w={168}>Admin</FooterText>
                <ToolButton $w={27} $h={22} aria-label="Zapisz"><Nav kind="save" /></ToolButton>
              </Footer>
            </Frame>
          </TabPanel>

          <BottomTabs>
            {bottomTabs.map((t) => (
              <BottomTab key={t.label} $w={t.w} $gap={t.gap} $active={t.active}>{t.icon}{t.label}</BottomTab>
            ))}
          </BottomTabs>
        </Content>
      </Window>
    </>
  );
}
